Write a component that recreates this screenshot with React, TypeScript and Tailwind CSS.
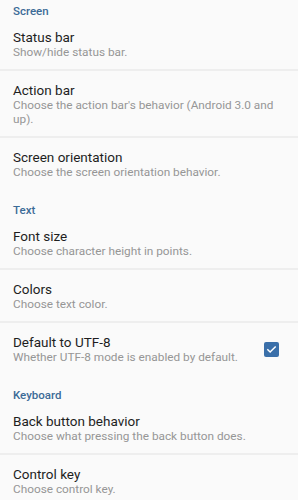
type Pref = { title: string; summary: string; checked?: boolean };
type Category = { name: string; items: Pref[] };

const categories: Category[] = [
    {
        name: 'Screen',
        items: [
            { title: 'Status bar', summary: 'Show/hide status bar.' },
            { title: 'Action bar', summary: "Choose the action bar's behavior (Android 3.0 and up)." },
            { title: 'Screen orientation', summary: 'Choose the screen orientation behavior.' },
        ],
    },
    {
        name: 'Text',
        items: [
            { title: 'Font size', summary: 'Choose character height in points.' },
            { title: 'Colors', summary: 'Choose text color.' },
            { title: 'Default to UTF-8', summary: 'Whether UTF-8 mode is enabled by default.', checked: true },
        ],
    },
    {
        name: 'Keyboard',
        items: [
            { title: 'Back button behavior', summary: 'Choose what pressing the back button does.' },
            { title: 'Control key', summary: 'Choose control key.' },
        ],
    },
];

function Checkbox() {
    return (
        <div className="w-[15px] h-[15px] rounded-[2px] bg-[#3a6fa9] flex items-center justify-center shrink-0">
            <svg width="11" height="11" viewBox="0 0 24 24" fill="none" stroke="white" strokeWidth="3.2" strokeLinecap="square">
                <path d="M4 12.5l5 5L20 6.5" />
            </svg>
        </div>
    );
}

export default function App() {
    return (
        <div className="w-[298px] h-[500px] overflow-hidden bg-[#fafafa]" style={{ fontFamily: 'Roboto, "Noto Sans", sans-serif' }}>
            {categories.map((cat, ci) => (
                <div key={cat.name}>
                    <div className={`${ci === 0 ? 'pt-[4px]' : 'pt-[13px]'} px-[13px] text-[11.5px] leading-[14px] font-medium text-[#3c6b97]`}>
                        {cat.name}
                    </div>
                    {cat.items.map((item, i) => {
                        const last = i === cat.items.length - 1;
                        return (
                            <div
                                key={item.title}
                                className={`flex items-center pl-[13px] pr-[19px] pt-[11px] ${last ? 'pb-[11px]' : 'pb-[10px] border-b-2 border-[#eeeeee]'}`}
                            >
                                <div className="flex-1 min-w-0">
                                    <div className="text-[13.5px] leading-[16px] text-[#1e1e1e]">{item.title}</div>
                                    <div className="text-[11.8px] leading-[14px] text-[#969696] -mr-[4px]">{item.summary}</div>
                                </div>
                                {item.checked && <Checkbox />}
                            </div>
                        );
                    })}
                </div>
            ))}
        </div>
    );
}
